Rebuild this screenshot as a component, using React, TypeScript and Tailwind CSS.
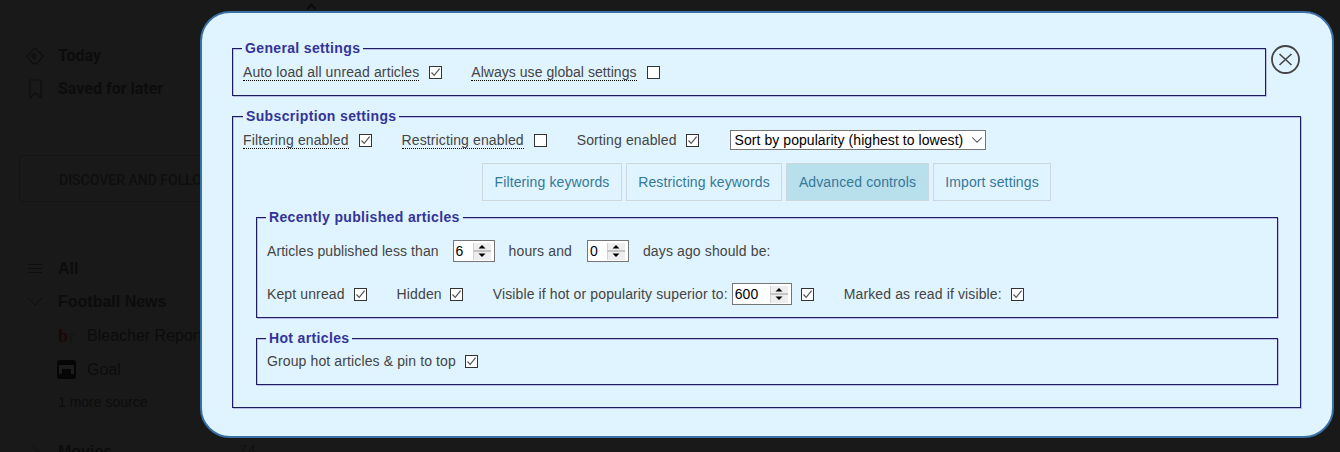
import type { ReactNode } from "react";
import { ChevronDown } from "lucide-react";

function Check({ on = false }: { on?: boolean }) {
  return (
    <span className="w-[13px] h-[13px] shrink-0 border border-[#333333] bg-white flex items-center justify-center">
      {on && (
        <svg width="11" height="11" viewBox="0 0 11 11" fill="none">
          <path d="M1.5 5.5 L4.2 8.4 L9.6 1.6" stroke="#555555" strokeWidth="1.2" />
        </svg>
      )}
    </span>
  );
}

function Hint({ children }: { children: ReactNode }) {
  return <span className="border-b border-dotted border-black leading-[16px]">{children}</span>;
}

function Spin({ value, w }: { value: string; w: string }) {
  return (
    <div className={`${w} h-[22px] shrink-0 bg-white border border-[#767676] flex items-center justify-between pl-[2px] pr-[3px] text-black`}>
      <span>{value}</span>
      <svg width="18" height="17" viewBox="0 0 18 17">
        <rect width="18" height="17" fill="#eeeeee" />
        <rect x="0" width="1" height="17" fill="#d2d2d2" />
        <rect y="7" width="18" height="2" fill="#c4c4c4" />
        <path d="M9 2 L12.5 5.5 L5.5 5.5 Z" fill="#000000" />
        <path d="M5.5 10.5 L12.5 10.5 L9 14 Z" fill="#000000" />
      </svg>
    </div>
  );
}

function Box({ title, className, legend = "-ml-[1px]", children }: { title: string; className: string; legend?: string; children: ReactNode }) {
  return (
    <fieldset className={`border border-[#1c1c5e] shadow-[1px_1px_0_#bcbcea,inset_1px_1px_0_#bcbcea] ${className}`}>
      <legend className={`px-[3px] ${legend} bg-[#e0f4ff] text-[14px] leading-[16px] font-bold tracking-[0.35px] text-[#333399]`}>{title}</legend>
      {children}
    </fieldset>
  );
}

function Tab({ label, active = false, w }: { label: string; active?: boolean; w: string }) {
  return (
    <div className={`${w} h-[38px] flex items-center justify-center border border-[#ccd8dc] text-[#35789a] ${active ? "bg-[#b8dfec]" : ""}`}>
      {label}
    </div>
  );
}

function SideRow({ icon, text, className = "" }: { icon: ReactNode; text: string; className?: string }) {
  return (
    <div className={`h-[33px] flex items-center ${className}`}>
      <div className="w-[20px] ml-[25px] mr-[13px] shrink-0 flex justify-center">{icon}</div>
      <span>{text}</span>
    </div>
  );
}

export default function App() {
  return (
    <main className="relative w-[1340px] h-[452px] overflow-hidden bg-[#191919] font-['Liberation_Sans',Arial,sans-serif]">
      {/* sidebar behind the overlay */}
      <div className="w-[262px] text-[#0c0c0c]">
        <div className="pt-[39px] font-['Roboto',sans-serif] text-[16px] font-bold">
          <SideRow
            text="Today"
            icon={
              <svg width="18" height="18" viewBox="0 0 18 18" fill="none" stroke="#0e0e0e" strokeWidth="1.1">
                <path d="M9 0.8 L17.2 9 L11 16.6 L7 16.6 L0.8 9 Z" />
                <path d="M9 5.5 L5.5 9 L8.6 12.2 M10 7.8 L7.8 10 M10 11 L8.6 12.2" />
              </svg>
            }
          />
          <SideRow
            text="Saved for later"
            icon={
              <svg width="13" height="20" viewBox="0 0 13 20" fill="none" stroke="#0e0e0e" strokeWidth="1.1">
                <path d="M1 1 H12 V18.5 L6.5 14 L1 18.5 Z" />
              </svg>
            }
          />
        </div>
        <div className="mt-[50px] ml-[19px] w-[300px] h-[47px] pt-[3px] border border-[#141414] rounded-[3px] flex items-center pl-[39px] font-['Roboto',sans-serif] text-[14px] font-medium text-[#0e0e0e] whitespace-nowrap">
          DISCOVER AND FOLLOW SOURCES
        </div>
        <div className="mt-[50px] text-[16px] whitespace-nowrap">
          <SideRow
            className="font-bold"
            text="All"
            icon={
              <svg width="14" height="9" viewBox="0 0 14 9" stroke="#0e0e0e">
                <path d="M0 0.5 H14 M0 4.5 H14 M0 8.5 H14" />
              </svg>
            }
          />
          <SideRow
            className="font-bold"
            text="Football News"
            icon={
              <svg width="16" height="9" viewBox="0 0 16 9" fill="none" stroke="#0e0e0e">
                <path d="M0.5 0.5 L8 8 L15.5 0.5" />
              </svg>
            }
          />
          <div className="h-[34px] pt-[1px] pl-[58px] flex items-center">
            <span className="w-[29px] font-['Liberation_Serif',serif] font-bold text-[18px] leading-[18px] text-[#1c0707]">b<span className="ml-[1px] font-normal text-[#141414]">r</span></span>
            <span>Bleacher Report</span>
          </div>
          <div className="h-[34px] pt-[1px] pl-[57px] flex items-center">
            <span className="w-[19px] h-[19px] mr-[11px] rounded-[3px] bg-[#060606] flex flex-col items-center pt-[5px]">
              <span className="w-[15px] h-[9px] border-t-4 border-x-[3px] border-[#1c1c1c]" />
            </span>
            <span>Goal</span>
          </div>
          <div className="h-[33px] pl-[58px] flex items-center text-[14px]">1 more source</div>
          <div className="mt-[16px] h-[33px] flex items-center">
            <svg className="ml-[32px] mr-[19px]" width="7" height="14" viewBox="0 0 7 14" fill="none" stroke="#0e0e0e">
              <path d="M0.5 0.5 L6.5 7 L0.5 13.5" />
            </svg>
            <span className="font-bold">Movies</span>
            <span className="ml-auto mr-[6px] text-[#111111]">74</span>
          </div>
        </div>
      </div>

      <svg className="absolute left-[307px] top-[3px]" width="9" height="7" viewBox="0 0 9 7" fill="none" stroke="#0a0a0a" strokeWidth="2">
        <path d="M0.5 6.5 L4.5 1.5 L8.5 6.5" />
      </svg>

      {/* settings dialog */}
      <div className="absolute left-[200px] top-[11px] w-[1134px] h-[427px] rounded-[30px] border-2 border-[#3a70a5] bg-[#e0f4ff] pl-[30px] pt-[27px] text-[14px] tracking-[0.12px] text-[#444444]">
        <div className="flex items-start">
          <Box title="General settings" className="w-[1034px] h-[56px] px-[10px] pt-[6px]">
            <div className="h-[20px] flex items-center whitespace-nowrap">
              <Hint>Auto load all unread articles</Hint>
              <span className="ml-[10px] mr-[29px]"><Check on /></span>
              <span className="tracking-[0.04px]"><Hint>Always use global settings</Hint></span>
              <span className="ml-[10px]"><Check /></span>
            </div>
          </Box>
          <svg className="ml-[5px] mt-[5px]" width="29" height="29" viewBox="0 0 29 29" fill="none" stroke="#444444">
            <circle cx="14.5" cy="14.5" r="13.5" strokeWidth="1.8" />
            <path d="M8.5 9 L20.5 20 M20.5 9 L8.5 20" strokeWidth="1.6" />
          </svg>
        </div>

        <Box title="Subscription settings" legend="ml-0" className="mt-[12px] w-[1069px] h-[300px] px-[10px] pt-[6px]">
          <div className="h-[20px] flex items-center whitespace-nowrap">
            <Hint>Filtering enabled</Hint>
            <span className="ml-[10px] mr-[30px]"><Check on /></span>
            <Hint>Restricting enabled</Hint>
            <span className="ml-[10px] mr-[30px]"><Check /></span>
            <span>Sorting enabled</span>
            <span className="ml-[9px] mr-[31px]"><Check on /></span>
            <div className="relative">
              <select
                defaultValue="popularity"
                className="block w-[256px] h-[20px] bg-white border border-[#767676] text-black pl-[4px] py-0 leading-[16px] tracking-[0.06px] appearance-none"
              >
                <option value="popularity">Sort by popularity (highest to lowest)</option>
              </select>
              <ChevronDown className="absolute right-0 top-[1px] pointer-events-none" size={18} strokeWidth={1.4} color="#444444" />
            </div>
          </div>

          <div className="mt-[13px] flex justify-center gap-[4px]">
            <Tab label="Filtering keywords" w="w-[140px]" />
            <Tab label="Restricting keywords" w="w-[156px]" />
            <Tab label="Advanced controls" w="w-[143px]" active />
            <Tab label="Import settings" w="w-[118px]" />
          </div>

          <Box title="Recently published articles" className="mt-[8px] ml-[13px] mr-[12px] h-[109px] px-[10px] pt-[15px]">
            <div className="h-[22px] flex items-center whitespace-nowrap">
              <span className="tracking-[0.07px]">Articles published less than</span>
              <span className="mx-[14px]"><Spin value="6" w="w-[42px]" /></span>
              <span>hours and</span>
              <span className="ml-[15px] mr-[14px]"><Spin value="0" w="w-[42px]" /></span>
              <span>days ago should be:</span>
            </div>
            <div className="mt-[21px] h-[22px] flex items-center whitespace-nowrap">
              <span>Kept unread</span>
              <span className="ml-[9px] mr-[30px]"><Check on /></span>
              <span>Hidden</span>
              <span className="ml-[8px] mr-[30px]"><Check on /></span>
              <span>Visible if hot or popularity superior to:</span>
              <span className="ml-[4px] mr-[9px]"><Spin value="600" w="w-[60px]" /></span>
              <Check on />
              <span className="ml-[30px]">Marked as read if visible:</span>
              <span className="ml-[9px]"><Check on /></span>
            </div>
          </Box>

          <Box title="Hot articles" className="mt-[12px] ml-[13px] mr-[12px] h-[55px] px-[10px] pt-[5px]">
            <div className="h-[20px] flex items-center whitespace-nowrap">
              <span>Group hot articles &amp; pin to top</span>
              <span className="ml-[9px]"><Check on /></span>
            </div>
          </Box>
        </Box>
      </div>
    </main>
  );
}
